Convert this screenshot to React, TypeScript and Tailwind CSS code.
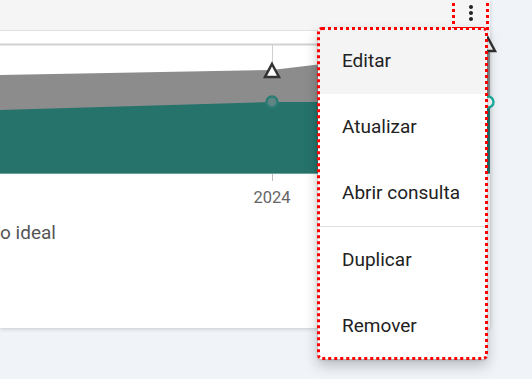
import { MdMoreVert } from "react-icons/md";

const menuItems = [
  { label: "Editar", active: true },
  { label: "Atualizar" },
  { label: "Abrir consulta", divider: true },
  { label: "Duplicar" },
  { label: "Remover" },
];

const Chart = () => (
  <svg width="490" height="180" viewBox="0 31 490 180" className="block overflow-visible">
    {/* grid */}
    <line x1="0" y1="44.5" x2="490" y2="44.5" stroke="#d2d2d2" strokeWidth="2" />
    <line x1="272.5" y1="44" x2="272.5" y2="173" stroke="#cfcfcf" strokeWidth="1" />

    {/* areas */}
    <polygon points="0,75 272,70 490,44 490,173 0,173" fill="#8c8c8c" />
    <polygon points="0,110 272,102 490,102 490,173 0,173" fill="#26736c" />
    <line x1="0" y1="173.5" x2="490" y2="173.5" stroke="#6fa19b" strokeWidth="1" />
    <line x1="486" y1="50" x2="486" y2="173" stroke="#555" strokeWidth="2" />

    {/* ticks */}
    <line x1="272.5" y1="174" x2="272.5" y2="181" stroke="#bdbdbd" strokeWidth="1" />
    <text
      x="272"
      y="203"
      textAnchor="middle"
      fontSize="16.5"
      fill="#666"
      fontFamily="Roboto, 'Noto Sans', sans-serif"
    >
      2024
    </text>

    {/* markers */}
    <polygon points="272,64 279,77 265,77" fill="#fff" stroke="#333" strokeWidth="2.5" />
    <circle cx="272" cy="102" r="5.5" fill="#5f8683" stroke="#2a7d75" strokeWidth="2.5" />
    <polygon points="488,38 495,51 481,51" fill="#fff" stroke="#333" strokeWidth="2.5" />
    <circle cx="488" cy="102" r="5.5" fill="#fff" stroke="#1fb3a2" strokeWidth="2.5" />
  </svg>
);

export default function App() {
  return (
    <div className="relative h-[379px] w-[532px] overflow-hidden bg-[#f0f4f8] font-['Roboto','Noto_Sans',sans-serif]">
      <div className="flex h-[328px] w-[490px] flex-col bg-white shadow-[0_1px_4px_rgba(0,0,0,0.18)]">
        <div className="flex h-[31px] shrink-0 justify-end border-b border-[#e2e2e2] bg-[#f5f5f5]">
          <button className="mr-[1px] mt-[-8px] flex h-[38px] w-[37px] items-end justify-center pb-[5px] text-[#222] outline-3 outline-dotted outline-[#ff0000] -outline-offset-3">
            <MdMoreVert size={24} />
          </button>
        </div>
        <Chart />
        <div className="mt-[12px] text-[19px] leading-none text-[#555]">o ideal</div>
      </div>

      <div className="absolute left-[318px] top-[28px] w-[169px] overflow-hidden rounded-[4px] bg-white shadow-[0_6px_14px_rgba(0,0,0,0.25),0_1px_3px_rgba(0,0,0,0.15)] outline-3 outline-dotted outline-[#ff0000] -outline-offset-2">
        {menuItems.map((item) => (
          <div key={item.label}>
            <div
              className={`flex h-[66px] items-center pl-[24px] text-[19px] text-[#222] ${
                item.active ? "bg-[#f4f4f4]" : ""
              }`}
            >
              {item.label}
            </div>
            {item.divider && <div className="h-px bg-[#e0e0e0]" />}
          </div>
        ))}
      </div>
    </div>
  );
}
